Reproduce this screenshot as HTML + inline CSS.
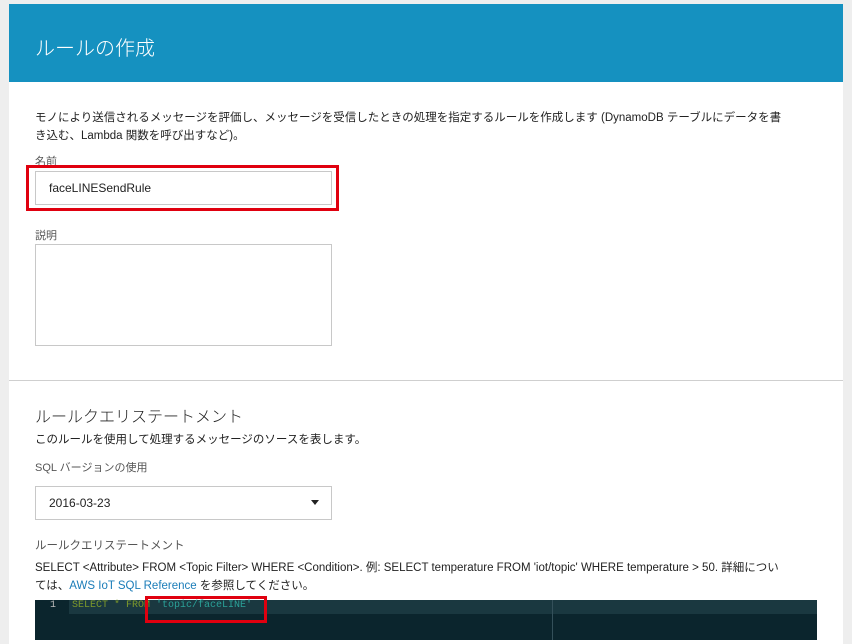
<!DOCTYPE html>
<html><head><meta charset="utf-8"><style>
body{margin:0;width:852px;height:631px;overflow:hidden;background:#eeeeee;font-family:"Liberation Sans","Noto Sans CJK JP",sans-serif;color:#222;position:relative}
.card{position:absolute;left:9px;top:4px;width:834px;height:640px;background:#fff}
.hdr{position:absolute;left:9px;top:4px;width:834px;height:78px;background:#1591c0}
.hdr div{position:absolute;left:26px;top:28px;color:#fff;font-size:20px;font-weight:300}
.t{position:absolute;font-size:11.5px;color:#222;white-space:nowrap}
.lbl{position:absolute;font-size:11px;color:#555;white-space:nowrap}
.box{position:absolute;border:1px solid #c8c8c8;background:#fff;box-sizing:border-box}
.red{position:absolute;border:3px solid #e0000f;box-sizing:border-box}
</style></head><body>
<div class="card"></div>
<div class="hdr"><div>ルールの作成</div></div>
<div class="t" style="left:35px;top:109px;line-height:18px">モノにより送信されるメッセージを評価し、メッセージを受信したときの処理を指定するルールを作成します (DynamoDB テーブルにデータを書<br>き込む、Lambda 関数を呼び出すなど)。</div>
<div class="lbl" style="left:35px;top:153px">名前</div>
<div class="box" style="left:35px;top:171px;width:297px;height:34px"></div>
<div class="t" style="left:49px;top:181px;font-size:12px">faceLINESendRule</div>
<div class="red" style="left:26px;top:165px;width:313px;height:46px"></div>
<div class="lbl" style="left:35px;top:227px">説明</div>
<div class="box" style="left:35px;top:244px;width:297px;height:102px"></div>
<div style="position:absolute;left:9px;top:380px;width:834px;height:1px;background:#cfcfcf"></div>
<div class="t" style="left:35px;top:403px;font-size:16px;font-weight:300">ルールクエリステートメント</div>
<div class="t" style="left:35px;top:431px;font-size:11.5px">このルールを使用して処理するメッセージのソースを表します。</div>
<div class="lbl" style="left:35px;top:459px">SQL バージョンの使用</div>
<div class="box" style="left:35px;top:486px;width:297px;height:34px"></div>
<div class="t" style="left:49px;top:496px;font-size:12px">2016-03-23</div>
<div style="position:absolute;left:311px;top:500px;width:0;height:0;border-left:4px solid transparent;border-right:4px solid transparent;border-top:5px solid #222"></div>
<div class="lbl" style="left:35px;top:537px;font-size:11.5px">ルールクエリステートメント</div>
<div class="t" style="left:35px;top:559px;line-height:18px">SELECT &lt;Attribute&gt; FROM &lt;Topic Filter&gt; WHERE &lt;Condition&gt;. 例: SELECT temperature FROM 'iot/topic' WHERE temperature &gt; 50. 詳細につい<br>ては、<span style="color:#1a7cb8">AWS IoT SQL Reference</span> を参照してください。</div>
<div style="position:absolute;left:35px;top:600px;width:782px;height:40px;background:#0b252d"></div>
<div style="position:absolute;left:69px;top:600px;width:748px;height:14px;background:#1a3840"></div>
<div style="position:absolute;left:552px;top:600px;width:1px;height:40px;background:#34505a"></div>
<div class="t" style="left:50px;top:600px;font-family:'Liberation Mono',monospace;font-size:10px;color:#bbb">1</div>
<div class="t" style="left:72px;top:600px;font-family:'Liberation Mono',monospace;font-size:10px;color:#7e9a2a">SELECT * FROM <span style="color:#2aa198">'topic/faceLINE'</span></div>
<div class="red" style="left:145px;top:596px;width:122px;height:27px"></div>
</body></html>
